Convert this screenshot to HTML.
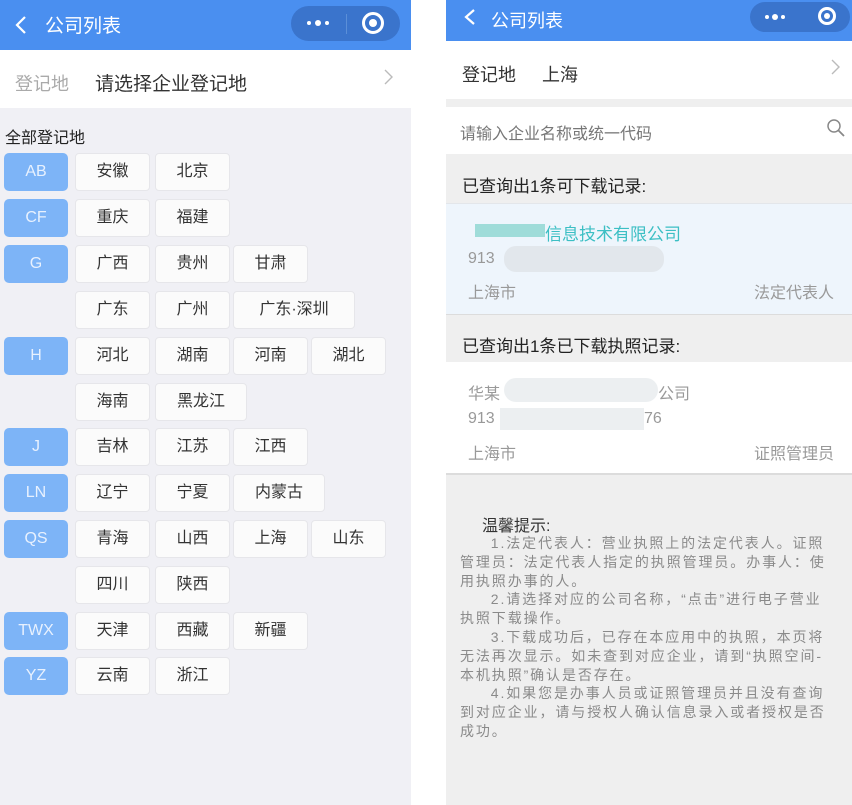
<!DOCTYPE html>
<html><head><meta charset="utf-8"><style>
*{margin:0;padding:0;box-sizing:border-box}
body{width:852px;height:805px;background:#fff;position:relative;overflow:hidden;font-family:"Liberation Sans","Noto Sans CJK SC",sans-serif}
.a{position:absolute}
.L{left:0;top:0;width:411px;height:805px;background:#f0f0f5}
.R{left:446px;top:0;width:406px;height:805px;background:#efefef}
.hd{background:#4a8ff0;color:#fff}
.cap{position:absolute;background:#3a74cc;border-radius:20px}
.dot{position:absolute;background:#fff;border-radius:50%}
.lb{position:absolute;width:64px;height:38px;background:#7db4f7;color:#e8f1fe;border-radius:5px;font-size:16px;text-align:center;line-height:38px}
.cb{position:absolute;width:75px;height:38px;background:#fbfbfb;border:1px solid #e6e6ea;border-radius:4px;font-size:16px;color:#333;text-align:center;line-height:36px}
.t{position:absolute;white-space:nowrap}
.tips p{text-indent:2.2em}
</style></head><body>
<div class="a L">
 <div class="a hd" style="left:0;top:0;width:411px;height:50px"></div>
 <svg class="a" style="left:14px;top:14px" width="14" height="22"><path d="M11 3 L3 11 L11 19" stroke="#fff" stroke-width="2.2" fill="none"/></svg>
 <div class="t" style="left:45px;top:11px;color:#fff;font-size:19px">公司列表</div>
 <div class="cap" style="left:291px;top:6px;width:109px;height:35px"></div>
 <div class="dot" style="left:307px;top:21px;width:4px;height:4px"></div>
 <div class="dot" style="left:315px;top:20px;width:6px;height:6px"></div>
 <div class="dot" style="left:325px;top:21px;width:4px;height:4px"></div>
 <div class="a" style="left:346px;top:14px;width:1px;height:20px;background:#5b8fd8"></div>
 <div class="a" style="left:362px;top:12px;width:22px;height:22px;border:3px solid #fff;border-radius:50%"></div>
 <div class="a" style="left:369px;top:19px;width:8px;height:8px;background:#fff;border-radius:50%"></div>
 <div class="a" style="left:0;top:50px;width:411px;height:58px;background:#fff"></div>
 <div class="t" style="left:15px;top:70px;font-size:18px;color:#aaa">登记地</div>
 <div class="t" style="left:95px;top:69px;font-size:19px;color:#333">请选择企业登记地</div>
 <svg class="a" style="left:383px;top:68px" width="12" height="20"><path d="M2 2 L9 9 L2 16" stroke="#bbb" stroke-width="1.4" fill="none"/></svg>
 <div class="t" style="left:5px;top:124px;font-size:16px;color:#222">全部登记地</div>

 <div class="lb" style="left:4px;top:153px">AB</div>
 <div class="cb" style="left:75px;top:153px">安徽</div><div class="cb" style="left:155px;top:153px">北京</div>
 <div class="lb" style="left:4px;top:199px">CF</div>
 <div class="cb" style="left:75px;top:199px">重庆</div><div class="cb" style="left:155px;top:199px">福建</div>
 <div class="lb" style="left:4px;top:245px">G</div>
 <div class="cb" style="left:75px;top:245px">广西</div><div class="cb" style="left:155px;top:245px">贵州</div><div class="cb" style="left:233px;top:245px">甘肃</div>
 <div class="cb" style="left:75px;top:291px">广东</div><div class="cb" style="left:155px;top:291px">广州</div><div class="cb" style="left:233px;top:291px;width:122px">广东·深圳</div>
 <div class="lb" style="left:4px;top:337px">H</div>
 <div class="cb" style="left:75px;top:337px">河北</div><div class="cb" style="left:155px;top:337px">湖南</div><div class="cb" style="left:233px;top:337px">河南</div><div class="cb" style="left:311px;top:337px">湖北</div>
 <div class="cb" style="left:75px;top:383px">海南</div><div class="cb" style="left:155px;top:383px;width:92px">黑龙江</div>
 <div class="lb" style="left:4px;top:428px">J</div>
 <div class="cb" style="left:75px;top:428px">吉林</div><div class="cb" style="left:155px;top:428px">江苏</div><div class="cb" style="left:233px;top:428px">江西</div>
 <div class="lb" style="left:4px;top:474px">LN</div>
 <div class="cb" style="left:75px;top:474px">辽宁</div><div class="cb" style="left:155px;top:474px">宁夏</div><div class="cb" style="left:233px;top:474px;width:92px">内蒙古</div>
 <div class="lb" style="left:4px;top:520px">QS</div>
 <div class="cb" style="left:75px;top:520px">青海</div><div class="cb" style="left:155px;top:520px">山西</div><div class="cb" style="left:233px;top:520px">上海</div><div class="cb" style="left:311px;top:520px">山东</div>
 <div class="cb" style="left:75px;top:566px">四川</div><div class="cb" style="left:155px;top:566px">陕西</div>
 <div class="lb" style="left:4px;top:612px">TWX</div>
 <div class="cb" style="left:75px;top:612px">天津</div><div class="cb" style="left:155px;top:612px">西藏</div><div class="cb" style="left:233px;top:612px">新疆</div>
 <div class="lb" style="left:4px;top:657px">YZ</div>
 <div class="cb" style="left:75px;top:657px">云南</div><div class="cb" style="left:155px;top:657px">浙江</div>
</div>

<div class="a R">
 <div class="a hd" style="left:0;top:0;width:406px;height:41px"></div>
 <svg class="a" style="left:17px;top:7px" width="14" height="22"><path d="M11 3 L3 10 L11 17" stroke="#fff" stroke-width="2.2" fill="none"/></svg>
 <div class="t" style="left:45px;top:7px;color:#fff;font-size:18px">公司列表</div>
 <div class="cap" style="left:304px;top:2px;width:100px;height:30px"></div>
 <div class="dot" style="left:319px;top:15px;width:4px;height:4px"></div>
 <div class="dot" style="left:326px;top:14px;width:6px;height:6px"></div>
 <div class="dot" style="left:335px;top:15px;width:4px;height:4px"></div>
 <div class="a" style="left:372px;top:7px;width:18px;height:18px;border:3px solid #fff;border-radius:50%"></div>
 <div class="a" style="left:378px;top:13px;width:6px;height:6px;background:#fff;border-radius:50%"></div>
 <div class="a" style="left:0;top:41px;width:406px;height:58px;background:#fff"></div>
 <div class="t" style="left:16px;top:61px;font-size:18px;color:#333">登记地</div>
 <div class="t" style="left:96px;top:61px;font-size:18px;color:#333">上海</div>
 <svg class="a" style="left:384px;top:58px" width="12" height="20"><path d="M2 2 L9 9 L2 16" stroke="#bbb" stroke-width="1.4" fill="none"/></svg>
 <div class="a" style="left:0;top:107px;width:406px;height:47px;background:#fff"></div>
 <div class="t" style="left:14px;top:120px;font-size:16px;color:#777">请输入企业名称或统一代码</div>
 <svg class="a" style="left:380px;top:118px" width="22" height="22"><circle cx="8" cy="8" r="6" stroke="#888" stroke-width="1.5" fill="none"/><path d="M12.5 12.5 L18 18" stroke="#888" stroke-width="1.8"/></svg>
 <div class="t" style="left:16px;top:172px;font-size:17px;color:#222">已查询出1条可下载记录:</div>
 <div class="a" style="left:0;top:203px;width:406px;height:112px;background:#eef5fc;border-top:1px solid #e3e6ea;border-bottom:1px solid #dcdcdc"></div>
 <div class="a" style="left:29px;top:224px;width:70px;height:13px;background:#9fdcd9"></div>
 <div class="t" style="left:99px;top:220px;font-size:17px;color:#3cbfc4">信息技术有限公司</div>
 <div class="t" style="left:22px;top:250px;font-size:16px;color:#999">913</div>
 <div class="a" style="left:58px;top:246px;width:160px;height:26px;background:#e2e7ec;border-radius:12px"></div>
 <div class="t" style="left:22px;top:279px;font-size:16px;color:#999">上海市</div>
 <div class="t" style="right:18px;top:279px;font-size:16px;color:#999">法定代表人</div>
 <div class="t" style="left:16px;top:332px;font-size:17px;color:#222">已查询出1条已下载执照记录:</div>
 <div class="a" style="left:0;top:362px;width:406px;height:113px;background:#fff;border-bottom:2px solid #dcdcdc"></div>
 <div class="t" style="left:22px;top:380px;font-size:16px;color:#999">华某</div>
 <div class="a" style="left:58px;top:378px;width:154px;height:24px;background:#eceff1;border-radius:12px"></div>
 <div class="t" style="left:212px;top:380px;font-size:16px;color:#999">公司</div>
 <div class="t" style="left:22px;top:410px;font-size:16px;color:#999">913</div>
 <div class="a" style="left:54px;top:408px;width:144px;height:22px;background:#eceff1"></div>
 <div class="t" style="left:198px;top:410px;font-size:16px;color:#999">76</div>
 <div class="t" style="left:22px;top:440px;font-size:16px;color:#999">上海市</div>
 <div class="t" style="right:18px;top:440px;font-size:16px;color:#999">证照管理员</div>
 <div class="t" style="left:36px;top:512px;font-size:16px;color:#333">温馨提示:</div>
 <div class="a tips" style="left:14px;top:534px;width:368px;font-size:14px;letter-spacing:1.9px;line-height:18.8px;color:#8a8a8a">
  <p>1.法定代表人：营业执照上的法定代表人。证照管理员：法定代表人指定的执照管理员。办事人：使用执照办事的人。</p>
  <p>2.请选择对应的公司名称，“点击”进行电子营业执照下载操作。</p>
  <p>3.下载成功后，已存在本应用中的执照，本页将无法再次显示。如未查到对应企业，请到“执照空间-本机执照”确认是否存在。</p>
  <p>4.如果您是办事人员或证照管理员并且没有查询到对应企业，请与授权人确认信息录入或者授权是否成功。</p>
 </div>
</div>
</body></html>
